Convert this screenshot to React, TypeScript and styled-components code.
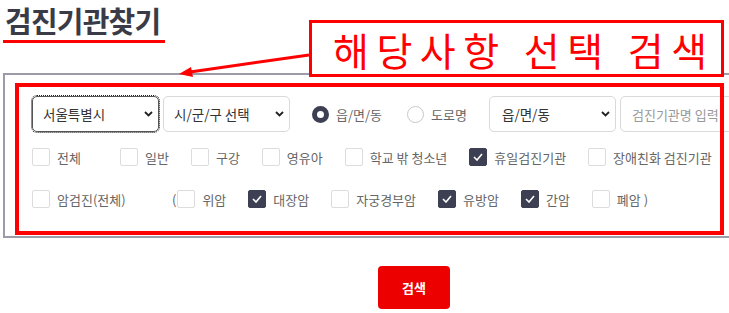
import React from 'react';
import styled, { createGlobalStyle } from 'styled-components';

const Global = createGlobalStyle`
  html, body { margin: 0; padding: 0; background: #fff; overflow: hidden; }
  body { font-family: "Noto Sans CJK KR", "Noto Sans", sans-serif; }
  * { box-sizing: border-box; }
`;

const Page = styled.div`
  position: relative;
  width: 825px;
  padding-left: 3px;
`;

const TitleWrap = styled.div`
  height: 73px;
  padding-top: 2px;
`;

const Title = styled.h1`
  display: inline-block;
  margin: 0;
  padding: 0 5px 2px 2px;
  font-size: 29px;
  line-height: 36px;
  font-weight: 700;
  color: #3a3b47;
  letter-spacing: -0.8px;
  border-bottom: 3px solid #ff0000;
`;

const Panel = styled.div`
  border: 2px solid #9c9ca8;
  padding: 21px 0 27px 27px;
`;

const Row = styled.div<{ $mt?: number; $h: number }>`
  display: flex;
  align-items: center;
  height: ${p => p.$h}px;
  margin-top: ${p => p.$mt ?? 0}px;
  white-space: nowrap;
`;

const SelectBox = styled.div<{ $focus?: boolean; $ml?: number; $pl?: number }>`
  display: flex;
  align-items: center;
  justify-content: space-between;
  width: 127px;
  height: 36px;
  margin-left: ${p => p.$ml ?? 0}px;
  padding: 0 5px 0 ${p => p.$pl ?? 10}px;
  border: 1px solid ${p => (p.$focus ? '#555' : '#d9d9d9')};
  border-radius: 5px;
  outline: ${p => (p.$focus ? '1px dotted #222' : 'none')};
  outline-offset: 0;
  font-size: 13.5px;
  color: #333;
  background: #fff;
`;

const Chevron = () => (
  <svg width="9" height="6" viewBox="0 0 9 6">
    <path d="M1 1 L4.5 4.5 L8 1" stroke="#222" strokeWidth="1.8" fill="none" />
  </svg>
);

const RadioItem = styled.label<{ $ml: number }>`
  display: flex;
  align-items: center;
  margin-left: ${p => p.$ml}px;
  font-size: 13px;
  color: #666;
  gap: 7px;
`;

const RadioDot = styled.span<{ $on?: boolean }>`
  width: 17px;
  height: 17px;
  border-radius: 50%;
  background: #fff;
  border: ${p => (p.$on ? '5px solid #3d3f52' : '1px solid #c8c8c8')};
`;

const TextInput = styled.input`
  width: 200px;
  height: 36px;
  margin-left: 4px;
  padding: 0 11px;
  border: 1px solid #d9d9d9;
  border-radius: 5px;
  font-family: inherit;
  font-size: 13px;
  color: #333;
  outline: none;
  &::placeholder { color: #999; }
`;

const CheckItem = styled.label<{ $w?: number }>`
  display: flex;
  align-items: center;
  gap: 7px;
  font-size: 13px;
  color: #666;
  margin-right: ${p => (p.$w ? 0 : 22)}px;
  width: ${p => (p.$w ? `${p.$w}px` : 'auto')};
`;

const Box = styled.span<{ $on?: boolean }>`
  display: flex;
  align-items: center;
  justify-content: center;
  width: 18px;
  height: 18px;
  border-radius: 2px;
  border: 1px solid ${p => (p.$on ? '#3d3f52' : '#dcdcdc')};
  background: ${p => (p.$on ? '#3d3f52' : '#fff')};
`;

const Paren = styled.span`
  font-size: 13px;
  color: #666;
  margin-right: 1px;
`;

const Check = ({ label, on, w }: { label: string; on?: boolean; w?: number }) => (
  <CheckItem $w={w}>
    <Box $on={on}>
      {on && (
        <svg width="10" height="8" viewBox="0 0 10 8">
          <path d="M1 4 L4 7 L9 1" stroke="#fff" strokeWidth="1.6" fill="none" />
        </svg>
      )}
    </Box>
    {label}
  </CheckItem>
);

const ButtonRow = styled.div`
  display: flex;
  justify-content: center;
  margin-top: 28px;
`;

const SearchButton = styled.button`
  width: 72px;
  height: 43px;
  border: none;
  border-radius: 4px;
  background: #ec0000;
  color: #fff;
  font-family: inherit;
  font-size: 13px;
  font-weight: 700;
`;

const RedFrame = styled.div`
  position: absolute;
  left: 15px;
  top: 83px;
  width: 709px;
  height: 152px;
  border: 4px solid #ff0000;
  pointer-events: none;
`;

const Callout = styled.div`
  position: absolute;
  left: 309px;
  top: 20px;
  width: 415px;
  height: 57px;
  border: 3px solid #ff0000;
  background: #fff;
  display: flex;
  align-items: center;
  padding-left: 21px;
  font-size: 39px;
  font-weight: 400;
  color: #ff0000;
  letter-spacing: 7.5px;
  word-spacing: 1px;
  white-space: nowrap;
  overflow: hidden;
`;

const Arrow = styled.svg`
  position: absolute;
  left: 170px;
  top: 46px;
  overflow: visible;
`;

export default function App() {
  return (
    <>
      <Global />
      <Page>
        <TitleWrap>
          <Title>검진기관찾기</Title>
        </TitleWrap>
        <Panel>
          <Row $h={36}>
            <SelectBox $focus>
              서울특별시
              <Chevron />
            </SelectBox>
            <SelectBox $ml={4}>
              시/군/구 선택
              <Chevron />
            </SelectBox>
            <RadioItem $ml={22}>
              <RadioDot $on />
              읍/면/동
            </RadioItem>
            <RadioItem $ml={25}>
              <RadioDot />
              도로명
            </RadioItem>
            <SelectBox $ml={22} $pl={12}>
              읍/면/동
              <Chevron />
            </SelectBox>
            <TextInput placeholder="검진기관명 입력" />
          </Row>
          <Row $h={20} $mt={15}>
            <Check label="전체" w={88} />
            <Check label="일반" />
            <Check label="구강" />
            <Check label="영유아" />
            <Check label="학교 밖 청소년" />
            <Check label="휴일검진기관" on />
            <Check label="장애친화 검진기관" />
          </Row>
          <Row $h={20} $mt={22}>
            <Check label="암검진(전체)" w={140} />
            <Paren>(</Paren>
            <Check label="위암" />
            <Check label="대장암" on />
            <Check label="자궁경부암" />
            <Check label="유방암" on />
            <Check label="간암" on />
            <Check label="폐암 )" />
          </Row>
        </Panel>
        <ButtonRow>
          <SearchButton>검색</SearchButton>
        </ButtonRow>

        <RedFrame />
        <Arrow width="145" height="32" viewBox="0 0 145 32">
          <line x1="139" y1="9" x2="20" y2="26" stroke="#ff0000" strokeWidth="3" />
          <polygon points="9,28 23,31 21,21" fill="#ff0000" />
        </Arrow>
        <Callout>해당사항 선택 검색</Callout>
      </Page>
    </>
  );
}
